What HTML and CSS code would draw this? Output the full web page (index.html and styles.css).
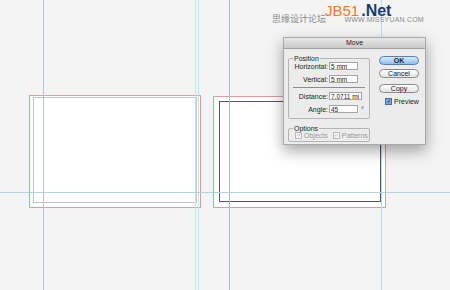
FILE: index.html
```html
<!DOCTYPE html>
<html lang="en">
<head>
    <meta charset="UTF-8">
    <title>Move</title>
    <link rel="stylesheet" href="styles.css">
</head>
<body>

    <div class="canvas">
        <!-- artboards -->
        <div class="card card-left">
            <div class="ghost ghost-left"></div>
        </div>
        <div class="card card-right">
            <div class="ghost ghost-right"></div>
        </div>

        <!-- guides -->
        <div class="guide v g1"></div>
        <div class="guide v g2"></div>
        <div class="guide v g3"></div>
        <div class="guide v g4"></div>
        <div class="guide v g5"></div>
        <div class="guide h g6"></div>

        <!-- watermark -->
        <div class="watermark">
            <span class="wm-cn">思缘设计论坛</span>
            <span class="wm-url">WWW.MISSYUAN.COM</span>
        </div>
        <div class="logo"><span class="jb">JB51</span><span class="net">.Net</span></div>

        <div class="dialog">
            <div class="title">Move</div>
            <div class="body">
                <div class="left">
                    <fieldset class="group">
                        <legend>Position</legend>
                        <div class="rows">
                            <div class="row">
                                <label>Horizontal:</label>
                                <span class="input">5 mm</span>
                            </div>
                            <div class="row">
                                <label>Vertical:</label>
                                <span class="input">5 mm</span>
                            </div>
                        </div>
                        <div class="sep"></div>
                        <div class="rows">
                            <div class="row">
                                <label>Distance:</label>
                                <span class="input wide">7.0711 mi</span>
                            </div>
                            <div class="row">
                                <label>Angle:</label>
                                <span class="input">45</span>
                                <span class="deg">°</span>
                            </div>
                        </div>
                    </fieldset>
                    <fieldset class="group options">
                        <legend>Options</legend>
                        <div class="checks">
                            <span class="check off"><span class="box">✓</span>Objects</span>
                            <span class="check off"><span class="box">✓</span>Patterns</span>
                        </div>
                    </fieldset>
                </div>
                <div class="right">
                    <div class="btn ok">OK</div>
                    <div class="btn cancel">Cancel</div>
                    <div class="btn copy">Copy</div>
                    <div class="check preview"><span class="box on">✓</span>Preview</div>
                </div>
            </div>
        </div>
    </div>

</body>
</html>
```

FILE: styles.css
```css
body {
    margin: 0;
    font-family: "Liberation Sans", Arial, sans-serif;
}
.canvas {
    position: relative;
    width: 450px;
    height: 290px;
    background-color: #f4f4f4;
    overflow: hidden;
}

/* artboards */
.card {
    position: absolute;
    background: #fff;
    border: 1px solid #e29a9a;
}
.card-left {
    left: 29px;
    top: 95px;
    width: 170px;
    height: 111px;
}
.card-right {
    left: 213px;
    top: 96px;
    width: 171px;
    height: 110px;
}
.ghost {
    position: absolute;
}
.ghost-left {
    left: 3px;
    top: 1px;
    width: 162px;
    height: 104px;
    border: 1px solid #c4c4c4;
}
.ghost-right {
    left: 5px;
    top: 4px;
    width: 160px;
    height: 99px;
    border: 1px solid #555;
}

/* guides */
.guide {
    position: absolute;
    background: #c4e4f0;
}
.guide.v {
    top: 0;
    width: 1px;
    height: 290px;
}
.guide.h {
    left: 0;
    width: 450px;
    height: 1px;
    background: #b4d2de;
}
.g1 { left: 43px; background: #b2c6d6; }
.g2 { left: 195px; }
.g3 { left: 198px; }
.g4 { left: 229px; background: #aabcc6; }
.g5 { left: 381px; background: #b6dcec; }
.g6 { top: 192px; }

/* watermark */
.watermark {
    position: absolute;
    left: 272px;
    top: 8px;
    color: #8a8a8a;
    white-space: nowrap;
}
.wm-cn {
    font-family: "Noto Sans CJK SC", sans-serif;
    font-size: 9px;
}
.wm-url {
    font-size: 7px;
    margin-left: 14px;
    letter-spacing: 0.2px;
}
.logo {
    position: absolute;
    left: 325px;
    top: 2px;
    white-space: nowrap;
}
.jb {
    color: #f07a22;
    font-size: 15px;
}
.net {
    color: #1c3c6c;
    font-size: 16px;
    font-weight: bold;
    margin-left: 2px;
}

/* dialog */
.dialog {
    position: absolute;
    left: 283px;
    top: 37px;
    width: 143px;
    height: 108px;
    background: #ececec;
    border: 1px solid #a8a8a8;
    box-sizing: border-box;
    box-shadow: 0 6px 14px rgba(0,0,0,0.35);
    font-size: 7px;
    color: #222;
}
.title {
    height: 10px;
    line-height: 10px;
    text-align: center;
    background: linear-gradient(#e8e8e8, #cacaca);
    border-bottom: 1px solid #a0a0a0;
}
.body {
    display: flex;
    padding: 6px 0 0 4px;
}
.left {
    width: 82px;
}
.group {
    margin: 0;
    padding: 0 2px 5px 2px;
    border: 1px solid #b4b4b4;
    border-radius: 2px;
    min-width: 0;
}
.group legend {
    padding: 0 1px;
    margin-left: 2px;
    line-height: 7px;
    font-size: 7px;
}
.rows {
    display: flex;
    flex-direction: column;
    gap: 5px;
}
.row {
    display: flex;
    align-items: center;
    height: 8px;
}
.row label {
    width: 37px;
    text-align: right;
    padding-right: 1px;
}
.input {
    width: 29px;
    height: 8px;
    line-height: 8px;
    padding-left: 1px;
    box-sizing: border-box;
    background: #fff;
    border: 1px solid #a4a4a4;
    font-size: 6.5px;
    white-space: nowrap;
    overflow: hidden;
}
.input.wide {
    width: 33px;
}
.deg {
    margin-left: 3px;
}
.sep {
    height: 1px;
    background: #8c8c8c;
    margin: 4px 2px;
}
.options {
    margin-top: 6px;
    padding-bottom: 2px;
}
.checks {
    display: flex;
    gap: 5px;
    padding-left: 4px;
}
.check {
    display: flex;
    align-items: center;
    white-space: nowrap;
}
.check.off {
    color: #9a9a9a;
}
.box {
    width: 5px;
    height: 5px;
    margin-right: 2px;
    border: 1px solid #b8b8b8;
    background: #f6f6f6;
    font-size: 5px;
    line-height: 5px;
    text-align: center;
    color: #a0a0a0;
}

/* buttons */
.right {
    display: flex;
    flex-direction: column;
    width: 40px;
    margin-left: 9px;
    margin-top: 1px;
}
.btn {
    height: 9px;
    box-sizing: border-box;
    text-align: center;
    border: 1px solid #8a8a8a;
    border-radius: 5px;
    background: linear-gradient(#ffffff, #e2e2e2);
    line-height: 7px;
}
.btn.ok {
    border-color: #5a7eac;
    background: linear-gradient(#d6ebfc, #8cc0f2);
    font-weight: bold;
}
.btn.cancel {
    margin-top: 4px;
}
.btn.copy {
    margin-top: 6px;
}
.preview {
    margin-top: 5px;
    padding-left: 6px;
}
.box.on {
    border-color: #4a6fa8;
    background: #7aa8e0;
    color: #123;
    font-weight: bold;
}
```
